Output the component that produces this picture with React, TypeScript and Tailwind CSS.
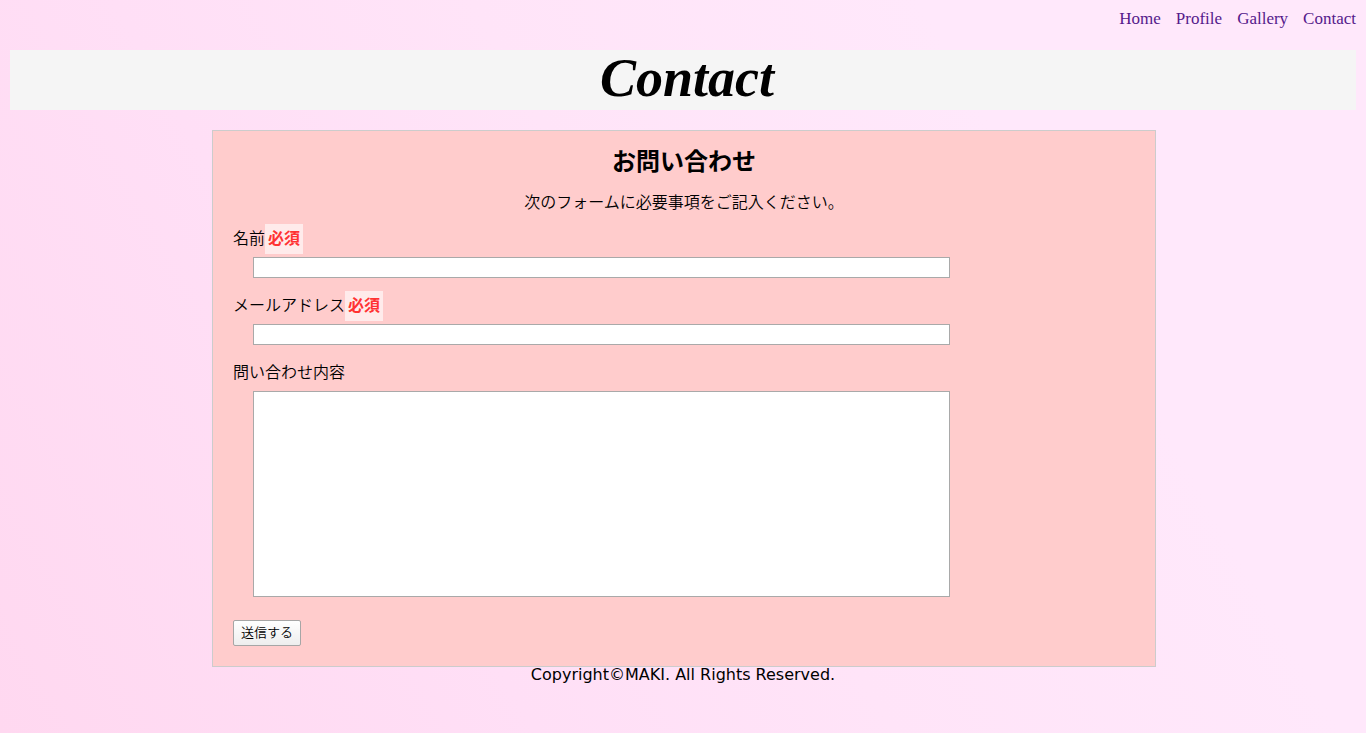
import React from "react";

const links = ["Home", "Profile", "Gallery", "Contact"];

function Required() {
  return (
    <span className="inline-block h-[30px] bg-[#ffebeb] px-[3px] font-bold text-[#ff3333]">
      必須
    </span>
  );
}

type FieldProps = {
  id: string;
  label: string;
  required?: boolean;
  children: React.ReactNode;
};

function Field({ id, label, required, children }: FieldProps) {
  return (
    <div>
      <label htmlFor={id} className="flex h-[30px] leading-[26px]">
        {label}
        {required && <Required />}
      </label>
      <div className="mt-[3px] pl-5">{children}</div>
    </div>
  );
}

export default function App() {
  return (
    <div className="min-h-screen bg-[linear-gradient(60deg,#ffd8f0,#ffdff6_30%,#ffe4f8_50%,#ffe8fb_75%,#ffe8fb)] px-[10px] font-['DejaVu_Sans','Noto_Sans_CJK_JP',sans-serif] text-base text-black">
      <header>
        <nav className="flex h-[50px] justify-end gap-[15px] pt-[7px] font-['Liberation_Serif',serif] text-[17px] leading-6 text-[#551a8b]">
          {links.map((name) => (
            <a key={name} href={`#${name.toLowerCase()}`}>
              {name}
            </a>
          ))}
        </nav>
        <h1 className="h-[60px] bg-[#f5f5f5] pl-2 text-center font-['Liberation_Serif',serif] text-[54px] font-bold italic leading-[56px]">
          Contact
        </h1>
      </header>
      <main className="ml-[15%] mt-5 w-[calc(70%+2px)] border border-[#cccccc] bg-[#ffcccc] px-5 pb-5 font-['Noto_Sans_CJK_JP',sans-serif] font-[350]">
        <h2 className="pt-[11px] text-center text-2xl font-bold leading-9">お問い合わせ</h2>
        <p className="mt-[11px] text-center leading-6">次のフォームに必要事項をご記入ください。</p>
        <form className="mt-[11px]" onSubmit={(e) => e.preventDefault()}>
          <div className="flex flex-col gap-[13px]">
            <Field id="name" label="名前" required>
              <input id="name" type="text" className="block h-[21px] w-[79%] border border-[#a9a9a9] bg-white px-1 text-[13px]" />
            </Field>
            <Field id="email" label="メールアドレス" required>
              <input id="email" type="email" className="block h-[21px] w-[79%] border border-[#a9a9a9] bg-white px-1 text-[13px]" />
            </Field>
            <Field id="message" label="問い合わせ内容">
              <textarea id="message" className="block h-[206px] w-[79%] resize-none border border-[#a9a9a9] bg-white p-1 text-[13px]" />
            </Field>
          </div>
          <button
            type="submit"
            className="mt-[23px] block h-[26px] rounded-[2px] border border-[#a6a6a6] bg-linear-to-b from-white to-[#eeeeee] px-[7px] pb-[2px] text-[13px] leading-5"
          >
            送信する
          </button>
        </form>
      </main>
      <footer className="text-center leading-4">Copyright©MAKI. All Rights Reserved.</footer>
    </div>
  );
}
